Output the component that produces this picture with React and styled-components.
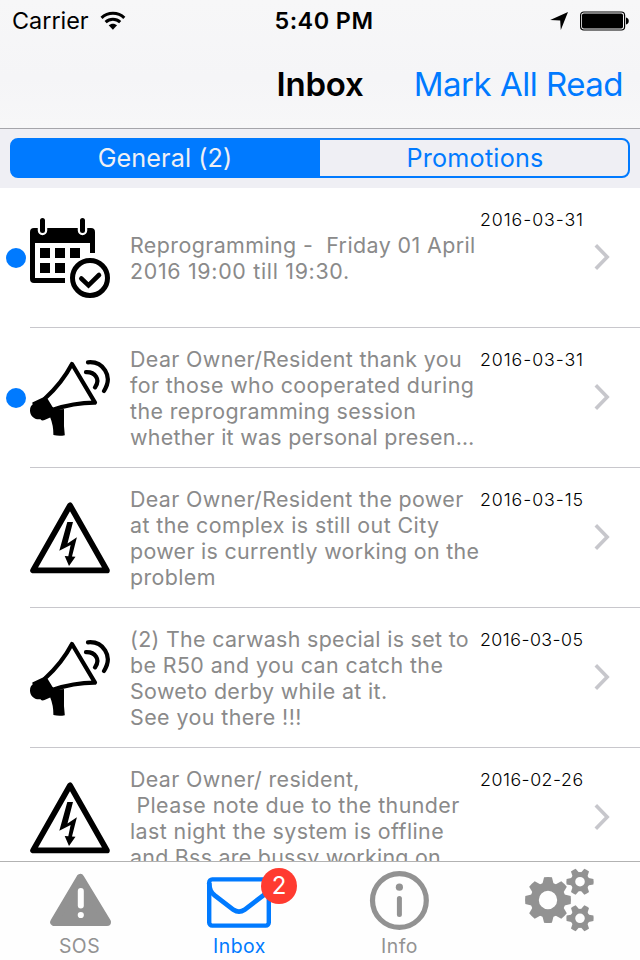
import React from "react";
import styled, { createGlobalStyle } from "styled-components";

const GlobalStyle = createGlobalStyle`
  * {
    box-sizing: border-box;
  }

  body {
    margin: 0;
    background: #fff;
    font-family: Inter, "Liberation Sans", sans-serif;
  }

  svg {
    display: block;
    flex: none;
  }
`

const Screen = styled.div`
  display: flex;
  flex-direction: column;
  width: 640px;
  height: 960px;
  overflow: hidden;
  background: #fff;
`

const Header = styled.header`
  flex: none;
  height: 129px;
  background: linear-gradient(#f7f7f8, #f5f5f7 60%, #f7f7f8);
  border-bottom: 1px solid #a5a5aa;
`

const StatusBar = styled.div`
  display: grid;
  grid-template-columns: 1fr auto 1fr;
  align-items: center;
  height: 41px;
  padding: 0 11px 0 12px;
  font-size: 23.4px;
  color: #000;
`

const StatusGroup = styled.div`
  display: flex;
  align-items: center;
  justify-content: ${props => props.$end ? "flex-end" : "flex-start"};
  gap: 11px;
`

const Clock = styled.span`
  padding-left: 7px;
  font-weight: 600;
  letter-spacing: 0.45px;
`

const NavBar = styled.div`
  display: grid;
  grid-template-columns: 1fr auto 1fr;
  align-items: center;
  height: 85px;
  padding: 0 17px;
  font-size: 33px;
`

const Title = styled.h1`
  grid-column: 2;
  margin: 0;
  font-size: 33px;
  font-weight: 600;
  letter-spacing: -0.2px;
`

const NavButton = styled.button`
  justify-self: end;
  padding: 0;
  border: none;
  background: none;
  font: inherit;
  letter-spacing: -0.5px;
  white-space: nowrap;
  color: #007aff;
`

const SegmentBar = styled.div`
  flex: none;
  height: 59px;
  padding: 9px 10px 10px;
  background: #efeff4;
`

const Segments = styled.div`
  display: flex;
  height: 40px;
  border: 2px solid #007aff;
  border-radius: 8px;
  background: linear-gradient(90deg, #007aff 50%, #efeff4 50%);
  overflow: hidden;
`

const Segment = styled.button`
  flex: 1;
  padding: ${props => props.$active ? "0 2px 0 0" : "0 0 0 2px"};
  border: none;
  background: ${props => props.$active ? "#007aff" : "transparent"};
  color: ${props => props.$active ? "#efeff4" : "#007aff"};
  font: inherit;
  font-size: 25.2px;
  letter-spacing: ${props => props.$active ? "0.1px" : "0.2px"};
`

const List = styled.ul`
  flex: 1;
  min-height: 0;
  margin: 0;
  padding: 0;
  list-style: none;
  overflow: hidden;
`

const Row = styled.li`
  display: flex;
  height: 140px;
`

const DotCell = styled.div`
  display: flex;
  align-items: center;
  width: 30px;
  padding-left: 6px;
`

const Dot = styled.span`
  width: 20px;
  height: 20px;
  border-radius: 50%;
  background: #007aff;
`

const RowBody = styled.div`
  flex: 1;
  display: flex;
  align-items: center;
  border-bottom: 1px solid #c8c7cc;
`

const Message = styled.p`
  display: flex;
  flex-direction: column;
  width: 350px;
  margin: 1px 0 0 20px;
  font-size: 21.4px;
  line-height: 26px;
  color: #8a8a8a;
`

const Line = styled.span`
  white-space: pre;
  letter-spacing: ${props => props.$track}px;
`

const DateLabel = styled.time`
  align-self: flex-start;
  width: 114px;
  margin-top: 21px;
  font-size: 17.8px;
  font-weight: 300;
  line-height: 21px;
  letter-spacing: ${props => props.$track}px;
  color: #000;
`

const ChevronCell = styled.span`
  padding-bottom: 1px;
`

const TabBar = styled.nav`
  flex: none;
  display: flex;
  height: 99px;
  border-top: 1px solid #b2b2b2;
  background: #fefefe;
`

const Tab = styled.div`
  flex: 1;
  display: flex;
  flex-direction: column;
  align-items: center;
  color: ${props => props.$active ? "#007aff" : "#929292"};
`

const TabIcon = styled.div`
  position: relative;
  height: 70px;
`

const TabLabel = styled.span`
  padding-right: 1px;
  font-size: 19.4px;
  line-height: 28px;
  letter-spacing: 0.5px;
`

const Badge = styled.span`
  position: absolute;
  top: 6px;
  left: 57px;
  width: 36px;
  height: 36px;
  border-radius: 50%;
  background: #ff3b30;
  color: #fff;
  font-size: 24px;
  line-height: 36px;
  text-align: center;
`

const WifiIcon = () => (
  <svg width="26" height="20" viewBox="0 0 26 20" fill="none" stroke="#000" strokeWidth="3">
    <path d="M1.5 6.8C8 0.7 18 0.7 24.3 6.8" />
    <path d="M5.6 11.2C9.8 7.3 16 7.3 20.2 11.2" />
    <path d="M8.7 14.3C11.2 12.1 14.6 12.1 17.1 14.3L12.9 18.7Z" fill="#000" stroke="none" />
  </svg>
)

const LocationIcon = () => (
  <svg width="19" height="19" viewBox="0 0 19 19">
    <path d="M18 0.9L0.2 8.9L10.2 9.5L10.8 19Z" fill="#000" />
  </svg>
)

const BatteryIcon = () => (
  <svg width="49" height="20" viewBox="0 0 49 20">
    <rect x="0.6" y="1" width="44" height="18" rx="3.2" fill="none" stroke="#000" strokeWidth="1.2" />
    <rect x="2" y="2.5" width="41" height="15" rx="1.8" fill="#000" />
    <path d="M46 6.5C49.7 7.3 49.7 12.7 46 13.5Z" fill="#000" />
  </svg>
)

const CalendarIcon = () => (
  <svg width="80" height="80" viewBox="0 0 80 80">
    <path d="M4 10H61Q65 10 65 14V35H60V25H5V60H35V65H4Q0 65 0 61V14Q0 10 4 10Z" />
    <path d="M12.5 2.5V12.5M52.5 2.5V12.5" stroke="#fff" strokeWidth="9.5" strokeLinecap="round" />
    <path d="M12.5 2.5V12.5M52.5 2.5V12.5" stroke="#000" strokeWidth="5" strokeLinecap="round" />
    <path d="M10 30h10v10h-10zM25 30h10v10h-10zM40 30h10v10h-10zM10 45h10v10h-10zM25 45h10v10h-10z" />
    <circle cx="60" cy="60" r="17.5" fill="none" stroke="#000" strokeWidth="5" />
    <path d="M51.3 60.5L58.5 67.3L69 57" fill="none" stroke="#000" strokeWidth="4.6" strokeLinecap="round" />
  </svg>
)

const MegaphoneIcon = () => (
  <svg width="80" height="80" viewBox="0 0 80 80">
    <path
      d="M42 6L65 44.6Q44 44.5 22 52L15 40.5Q32 25 42 6Z"
      fill="none" stroke="#000" strokeWidth="4.2" strokeLinejoin="round"
    />
    <path d="M2.3 44.5L15 38.5L23.6 52L34 51V59Q33.6 68 34.8 77.3Q29 78.5 23.4 77Q23.4 67 20.2 59.6L14.5 62Q12 63.3 10.5 61.2C4.5 62.2 0 57.5 0 52.7C0 49.5 1 47.5 2.6 46.5Z" />
    <path
      d="M56 14.2C65 13.8 70.8 21.5 65 29.4M58 4.3C72.5 3 83.8 17.5 74 33"
      fill="none" stroke="#000" strokeWidth="4.2" strokeLinecap="round"
    />
  </svg>
)

const PowerIcon = () => (
  <svg width="80" height="80" viewBox="0 0 80 80">
    <path d="M40 7.4L3.1 72.4H76.9Z" fill="none" stroke="#000" strokeWidth="5.8" strokeLinejoin="round" />
    <path d="M37.3 24H43L37.5 45.5L46.9 39.3L42 58.5L45.5 58.7L39 68L34.7 58L38.3 58.2L40.6 47L29.3 52.7Z" />
  </svg>
)

const Chevron = () => (
  <svg width="16" height="28" viewBox="0 0 16 28">
    <path d="M1.8 2.2L13.2 14L1.8 25.8" fill="none" stroke="#c7c7cc" strokeWidth="3.6" />
  </svg>
)

const SosIcon = () => (
  <svg width="72" height="70" viewBox="0 0 72 70">
    <path d="M36.3 16L10.2 60H63Z" fill="currentColor" stroke="currentColor" strokeWidth="8" strokeLinejoin="round" />
    <path d="M36.8 29V43.5" stroke="#fefefe" strokeWidth="6" strokeLinecap="round" />
    <circle cx="36.8" cy="53" r="3.1" fill="#fefefe" />
  </svg>
)

const InboxIcon = () => (
  <svg width="72" height="70" viewBox="0 0 72 70" fill="none" stroke="currentColor" strokeWidth="4.4">
    <rect x="5.2" y="17.4" width="59.6" height="46.2" rx="3" />
    <path d="M5.2 21C5.5 28 7 30.5 11 33.7L29.5 47.8Q35 51.5 40.5 47.8L59 33.7C63 30.5 64.5 28 64.8 21" strokeWidth="4.8" />
  </svg>
)

const InfoIcon = () => (
  <svg width="72" height="70" viewBox="0 0 72 70">
    <circle cx="35.4" cy="38.5" r="26.9" fill="none" stroke="currentColor" strokeWidth="5.2" />
    <circle cx="35.4" cy="25.2" r="3.6" fill="currentColor" />
    <path d="M35.4 36.5V52.5" stroke="currentColor" strokeWidth="5" strokeLinecap="round" />
  </svg>
)

const Gear = ({ cx, cy, r, root, hole, teeth, tip, base }) => {
  const step = 360 / teeth
  return (
    <g transform={`translate(${cx} ${cy})`}>
      <circle r={(root + hole) / 2} fill="none" stroke="currentColor" strokeWidth={root - hole} />
      {Array.from({ length: teeth }, (_, i) => (
        <path
          key={i}
          d={`M${root - 2} ${-base}L${r - 0.5} ${-tip}Q${r} 0 ${r - 0.5} ${tip}L${root - 2} ${base}Z`}
          fill="currentColor"
          transform={`rotate(${i * step})`}
        />
      ))}
    </g>
  )
}

const SettingsIcon = () => (
  <svg width="72" height="70" viewBox="0 0 72 70">
    <Gear cx={24} cy={38} r={23.2} root={17.6} hole={9.2} teeth={8} tip={3.9} base={5.8} />
    <Gear cx={56} cy={19.7} r={13.9} root={9.6} hole={4.8} teeth={6} tip={2.7} base={3.9} />
    <Gear cx={56} cy={56.3} r={13.9} root={9.6} hole={4.8} teeth={6} tip={2.7} base={3.9} />
  </svg>
)

const icons = {
  calendar: CalendarIcon,
  megaphone: MegaphoneIcon,
  power: PowerIcon,
}

// each line is [text, letter spacing]
const messages = [
  {
    id: 1, icon: "calendar", unread: true, date: ["2016-03-31", 0.9],
    lines: [["Reprogramming -  Friday 01 April", 0.42], ["2016 19:00 till 19:30.", 0.69]],
  },
  {
    id: 2, icon: "megaphone", unread: true, date: ["2016-03-31", 0.9],
    lines: [
      ["Dear Owner/Resident thank you", 0.38],
      ["for those who cooperated during", 0.38],
      ["the reprogramming session", 0.39],
      ["whether it was personal presen…", 0.29],
    ],
  },
  {
    id: 3, icon: "power", unread: false, date: ["2016-03-15", 0.9],
    lines: [
      ["Dear Owner/Resident the power", 0.36],
      ["at the complex is still out City", 0.42],
      ["power is currently working on the", 0.32],
      ["problem", 0.38],
    ],
  },
  {
    id: 4, icon: "megaphone", unread: false, date: ["2016-03-05", 0.45],
    lines: [
      ["(2) The carwash special is set to", 0.33],
      ["be R50 and you can catch the", 0.4],
      ["Soweto derby while at it.", 0.36],
      ["See you there !!!", 0.43],
    ],
  },
  {
    id: 5, icon: "power", unread: false, date: ["2016-02-26", 0.5],
    lines: [
      ["Dear Owner/ resident,", 0.36],
      [" Please note due to the thunder", 0.42],
      ["last night the system is offline", 0.42],
      ["and Bss are bussy working on", 0.27],
    ],
  },
]

const MessageRow = ({ message }) => {
  const Icon = icons[message.icon]
  const [date, dateTrack] = message.date
  return (
    <Row>
      <DotCell>{message.unread && <Dot />}</DotCell>
      <RowBody>
        <Icon />
        <Message>
          {message.lines.map(([text, track]) => <Line key={text} $track={track}>{text}</Line>)}
        </Message>
        <DateLabel $track={dateTrack}>{date}</DateLabel>
        <ChevronCell><Chevron /></ChevronCell>
      </RowBody>
    </Row>
  )
}

export default function App() {
  return (
    <Screen>
      <GlobalStyle />
      <Header>
        <StatusBar>
          <StatusGroup>
            <span>Carrier</span>
            <WifiIcon />
          </StatusGroup>
          <Clock>5:40 PM</Clock>
          <StatusGroup $end>
            <LocationIcon />
            <BatteryIcon />
          </StatusGroup>
        </StatusBar>
        <NavBar>
          <Title>Inbox</Title>
          <NavButton>Mark All Read</NavButton>
        </NavBar>
      </Header>
      <SegmentBar>
        <Segments>
          <Segment $active>General (2)</Segment>
          <Segment>Promotions</Segment>
        </Segments>
      </SegmentBar>
      <List>
        {messages.map(message => <MessageRow key={message.id} message={message} />)}
      </List>
      <TabBar>
        <Tab>
          <TabIcon><SosIcon /></TabIcon>
          <TabLabel>SOS</TabLabel>
        </Tab>
        <Tab $active>
          <TabIcon>
            <InboxIcon />
            <Badge>2</Badge>
          </TabIcon>
          <TabLabel>Inbox</TabLabel>
        </Tab>
        <Tab>
          <TabIcon><InfoIcon /></TabIcon>
          <TabLabel>Info</TabLabel>
        </Tab>
        <Tab>
          <TabIcon><SettingsIcon /></TabIcon>
        </Tab>
      </TabBar>
    </Screen>
  )
}
